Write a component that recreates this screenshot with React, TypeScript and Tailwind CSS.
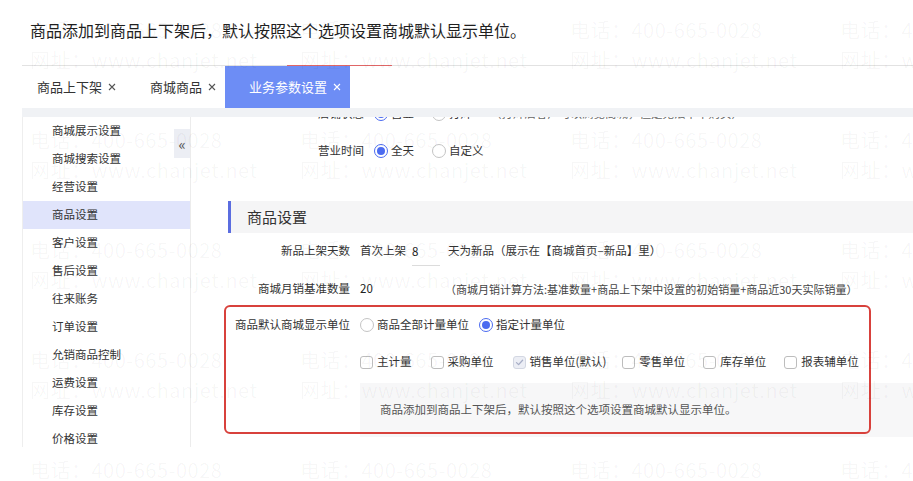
import React from 'react';

const menu = ['商城展示设置', '商城搜索设置', '经营设置', '商品设置', '客户设置', '售后设置', '往来账务', '订单设置', '允销商品控制', '运费设置', '库存设置', '价格设置'];

function Radio({ checked }: { checked?: boolean }) {
  return checked ? (
    <span className="w-[14px] h-[14px] rounded-full border border-[#4b6bf0] bg-white flex items-center justify-center shrink-0">
      <span className="w-[8px] h-[8px] rounded-full bg-[#4b6bf0]" />
    </span>
  ) : (
    <span className="w-[14px] h-[14px] rounded-full border border-[#c4c4c4] bg-white shrink-0" />
  );
}

function Check({ checked }: { checked?: boolean }) {
  return checked ? (
    <span className="w-[13px] h-[13px] rounded-[3px] border border-[#d3d7e2] bg-[#eceef5] flex items-center justify-center shrink-0">
      <svg width="9" height="9" viewBox="0 0 9 9" fill="none">
        <path d="M1.5 4.6 L3.6 6.6 L7.6 2.2" stroke="#a7aec6" strokeWidth="1.3" strokeLinecap="round" strokeLinejoin="round" />
      </svg>
    </span>
  ) : (
    <span className="w-[13px] h-[13px] rounded-[3px] border border-[#bdbdbd] bg-white shrink-0" />
  );
}

function X({ white }: { white?: boolean }) {
  return (
    <svg width="8" height="8" viewBox="0 0 8 8" className="ml-[6px] shrink-0">
      <path d="M1 1 L7 7 M7 1 L1 7" stroke={white ? '#ffffff' : '#555'} strokeWidth="1.1" />
    </svg>
  );
}

export default function App() {
  const cols = [0, 1, 2, 3];
  const rows = [0, 1, 2, 3, 4];
  return (
    <div className="relative w-[913px] h-[481px] bg-white overflow-hidden font-['Noto_Sans_CJK_SC','Noto_Sans',sans-serif] text-[#333]">
      <div className="h-[65px] pl-[30px] pt-[18px] text-[16px] leading-[24px] text-[#1f1f1f]">
        商品添加到商品上下架后，默认按照这个选项设置商城默认显示单位。
      </div>
      <div className="ml-[22px] border-t border-[#e2e2e2] flex flex-col">
        <div className="h-[42px] flex text-[13px] whitespace-nowrap">
          <div className="w-[113px] pl-[15px] flex items-center">商品上下架<X /></div>
          <div className="w-[90px] pl-[15px] flex items-center">商城商品<X /></div>
          <div className="pl-[24px] w-[125px] bg-[#6d8df5] text-white flex items-center">业务参数设置<X white /></div>
        </div>
        <div className="h-[9px] bg-[#f0f2f5]" />
        <div className="h-[330px] flex border-l border-[#eeeeee]">
          <div className="w-[168px] border-r border-[#ececec] relative shrink-0 text-[11.5px]">
            {menu.map((m) => (
              <div key={m} className={`h-[28px] flex items-center pl-[29px] ${m === '商品设置' ? 'bg-[#e0e4fb]' : ''}`}>{m}</div>
            ))}
            <div className="absolute right-0 top-[12px] w-[16px] h-[29px] bg-[#eceef4] flex items-center justify-center text-[15px] text-[#555] leading-none">«</div>
          </div>
          <div className="flex-1 pl-[37px] overflow-hidden text-[11.5px] whitespace-nowrap">
            <div className="-mt-[21px]">
              <div className="h-[36px] flex items-center">
                <span className="w-[136px] text-right">店铺状态</span>
                <span className="ml-[10px] flex items-center gap-[3px]"><Radio checked />营业</span>
                <span className="ml-[18px] flex items-center gap-[3px]"><Radio />打烊</span>
                <span className="ml-[18px] text-[#666]">（打烊后客户可以浏览商城，但是无法下单购买）</span>
              </div>
              <div className="h-[38px] flex items-center">
                <span className="w-[136px] text-right">营业时间</span>
                <span className="ml-[10px] flex items-center gap-[3px]"><Radio checked />全天</span>
                <span className="ml-[18px] flex items-center gap-[3px]"><Radio />自定义</span>
              </div>
              <div className="mt-[31px] h-[32px] bg-[#f5f5f6] border-l-[3px] border-[#5b6de0] pl-[16px] flex items-center text-[15px] text-[#333]">商品设置</div>
              <div className="h-[36px] flex items-center">
                <span className="w-[122px] text-right">新品上架天数</span>
                <span className="ml-[10px]">首次上架</span>
                <span className="ml-[6px] inline-block w-[28px] pt-[5px] pb-[4px] border-b border-[#dcdcdc] leading-[20px] text-[#222]">8</span>
                <span className="ml-[8px]">天为新品（展示在【商城首页–新品】里）</span>
              </div>
              <div className="h-[40px] flex items-center">
                <span className="w-[122px] text-right">商城月销基准数量</span>
                <span className="ml-[10px] w-[85px] text-[#222]">20</span>
                <span className="text-[11px] text-[#444]">（商城月销计算方法:基准数量+商品上下架中设置的初始销量+商品近30天实际销量）</span>
              </div>
              <div className="h-[32px] flex items-center">
                <span className="w-[122px] text-right">商品默认商城显示单位</span>
                <span className="ml-[10px] flex items-center gap-[3px]"><Radio />商品全部计量单位</span>
                <span className="ml-[10px] flex items-center gap-[3px]"><Radio checked />指定计量单位</span>
              </div>
              <div className="h-[42px] flex items-center pl-[132px]">
                <span className="flex items-center gap-[4px]"><Check />主计量</span>
                <span className="ml-[19px] flex items-center gap-[4px]"><Check />采购单位</span>
                <span className="ml-[19px] flex items-center gap-[4px]"><Check checked />销售单位(默认)</span>
                <span className="ml-[16px] flex items-center gap-[4px]"><Check />零售单位</span>
                <span className="ml-[18px] flex items-center gap-[4px]"><Check />库存单位</span>
                <span className="ml-[18px] flex items-center gap-[4px]"><Check />报表辅单位</span>
              </div>
              <div className="ml-[132px] h-[54px] bg-[#f7f7f8] pl-[20px] flex items-center text-[#555]">
                商品添加到商品上下架后，默认按照这个选项设置商城默认显示单位。
              </div>
            </div>
          </div>
        </div>
      </div>

      <div className="absolute left-[287px] top-[65px] w-[105px] h-px bg-[#e06666]" />
      <div className="absolute left-[224px] top-[305px] w-[647px] h-[129px] border-2 border-[#d8413c] rounded-[6px] pointer-events-none" />

      <div className="absolute inset-0 pointer-events-none pl-[30px] pt-[15px] grid grid-cols-[repeat(4,270px)] auto-rows-[110px] text-[20px] leading-[30px] tracking-[0.5px] text-[rgba(0,0,0,0.04)] whitespace-nowrap">
        {rows.map((r) =>
          cols.map((c) => (
            <div key={`${r}-${c}`}>
              <div>电话：400-665-0028</div>
              <div>网址：www.chanjet.net</div>
            </div>
          ))
        )}
      </div>
    </div>
  );
}
